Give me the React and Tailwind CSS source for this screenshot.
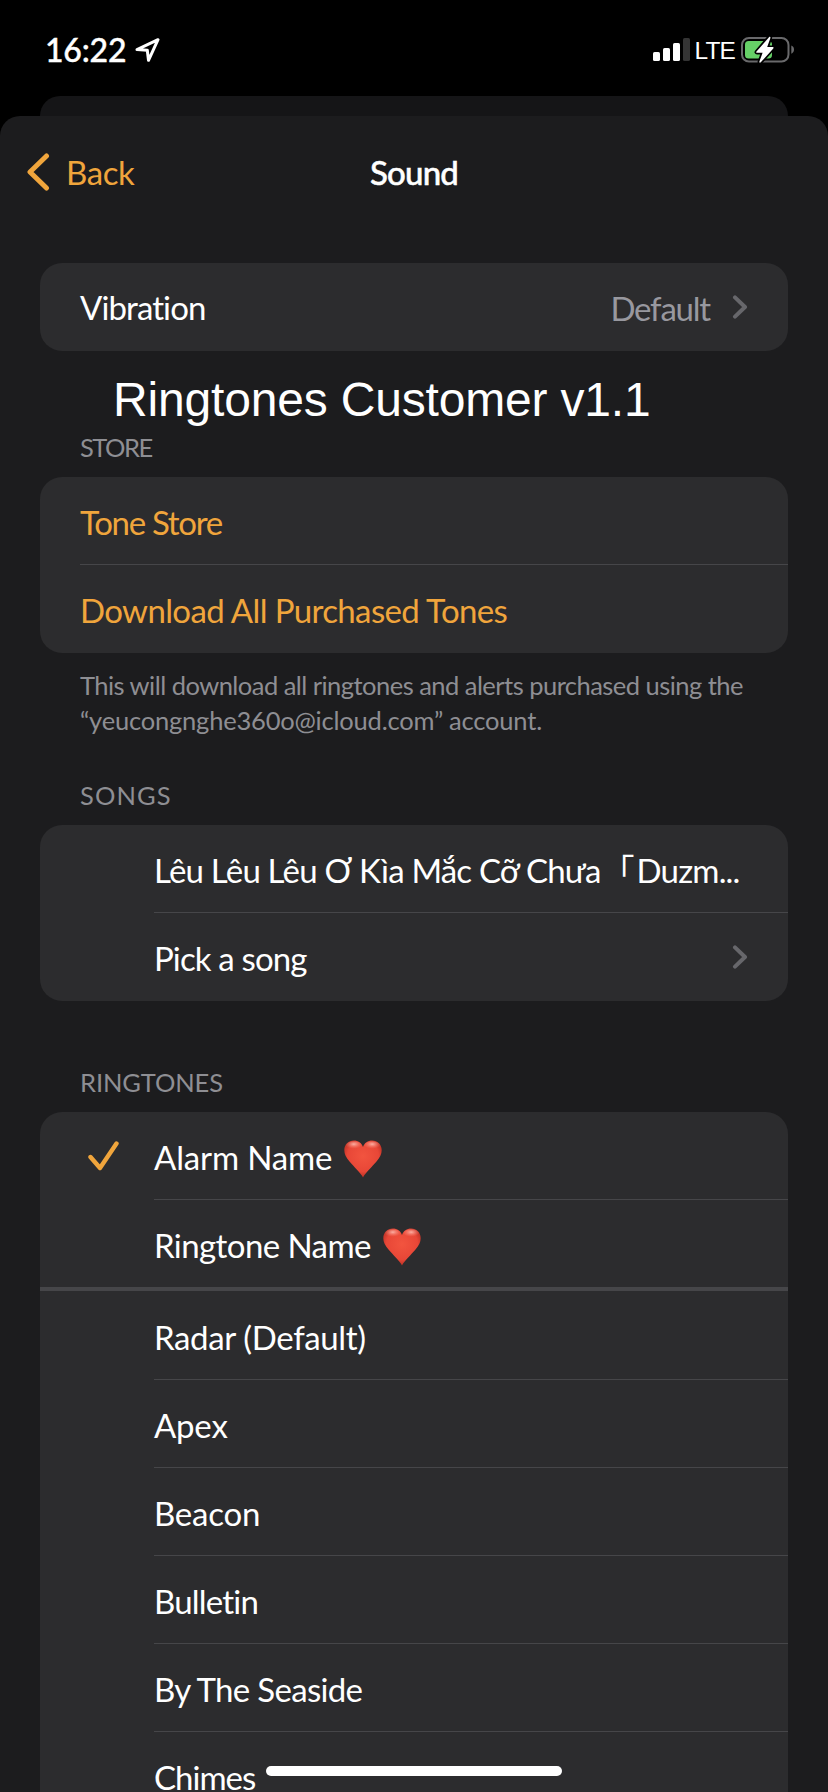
import React from "react";

const ringtones = [
  { name: "Apex", spacing: "tracking-[-0.2px]" },
  { name: "Beacon", spacing: "tracking-[-0.22px]" },
  { name: "Bulletin", spacing: "tracking-[-0.8px]" },
  { name: "By The Seaside", spacing: "tracking-[-0.68px]" },
];

function LocationArrow() {
  return (
    <svg className="ml-[9px] h-6 w-[25px]" viewBox="0 0 25 24" fill="none">
      <path d="M2 11.600 23 1.700 13.500 22.300 12.300 12.300Z" stroke="#fff" strokeWidth="3" strokeLinejoin="round" />
    </svg>
  );
}

function SignalBars() {
  return (
    <svg className="h-6 w-[37px]" viewBox="0 0 37 24">
      <rect x="0" y="14" width="7" height="9" rx="1.6" fill="#fff" />
      <rect x="10" y="10" width="7" height="13" rx="1.6" fill="#fff" />
      <rect x="20" y="5" width="7" height="18" rx="1.6" fill="#fff" />
      <rect x="30" y="0" width="7" height="23" rx="1.6" fill="#343434" />
    </svg>
  );
}

function Battery() {
  return (
    <svg className="h-[27px] w-[54px]" viewBox="0 0 54 27">
      <rect x="1" y="2" width="46.5" height="23.5" rx="7" fill="none" stroke="#69696b" strokeWidth="2" />
      <path d="M50.3 9.5c3.6 1.2 3.6 7 0 8.3Z" fill="#69696b" />
      <rect x="4" y="5" width="27" height="17.5" rx="3.5" fill="#66d067" />
      <path
        d="M28 1.2 15.5 15.5c-.6.7-.3 1.3.5 1.3h5.6l-3.2 8.6c-.4 1.2.6 1.7 1.4.9L32.3 12.4c.6-.7.3-1.3-.5-1.3h-5.6L29.4 2c.3-1-.6-1.6-1.4-.8Z"
        fill="#fff"
        stroke="#000"
        strokeWidth="3.4"
        paintOrder="stroke"
      />
    </svg>
  );
}

function Chevron() {
  return (
    <svg className="h-6 w-4" viewBox="0 0 16 24" fill="none">
      <path d="M3 2.4 13 12 3 21.6" stroke="#67676b" strokeWidth="4" strokeLinecap="round" strokeLinejoin="round" />
    </svg>
  );
}

function Check() {
  return (
    <svg className="h-[30px] w-[31px]" viewBox="0 0 31 30" fill="none">
      <path d="M2.5 16 12 27 28.5 2.5" stroke="#f0a53c" strokeWidth="4.4" strokeLinecap="round" strokeLinejoin="round" />
    </svg>
  );
}

function Heart({ id }) {
  return (
    <svg className="h-[38px] w-[38px]" viewBox="0 0 38 38">
      <defs>
        <radialGradient id={`${id}-body`} cx="0.5" cy="0.42" r="0.64">
          <stop offset="0" stopColor="#f2543f" />
          <stop offset="0.65" stopColor="#e84737" />
          <stop offset="1" stopColor="#a8281d" />
        </radialGradient>
        <radialGradient id={`${id}-gloss`} cx="0.5" cy="0.35" r="0.55">
          <stop offset="0" stopColor="#ffc9be" stopOpacity="0.8" />
          <stop offset="1" stopColor="#ff8a78" stopOpacity="0" />
        </radialGradient>
      </defs>
      <path
        d="M19 37.5C16.500 32.500 10 27 5.500 21.500 2 17.500.3 14 .3 10.300.3 4.500 4.600.6 9.800.6 14.200.6 17.600 3 19 7 20.400 3 23.800.6 28.200.6 33.400.6 37.700 4.500 37.700 10.300 37.700 14 36 17.500 32.500 21.500 28 27 21.500 32.500 19 37.500Z"
        fill={`url(#${id}-body)`}
      />
      <ellipse cx="9.800" cy="5.400" rx="8" ry="4.200" fill={`url(#${id}-gloss)`} />
      <ellipse cx="28.200" cy="5.400" rx="8" ry="4.200" fill={`url(#${id}-gloss)`} />
    </svg>
  );
}

function Card({ className = "", children }) {
  return <section className={`flex flex-col bg-[#2c2c2e] ${className}`}>{children}</section>;
}

function Separator({ inset }) {
  return <div className={`h-px shrink-0 bg-[#464649] ${inset}`} />;
}

export default function App() {
  return (
    <div className="flex h-[1792px] w-[828px] flex-col overflow-hidden bg-black font-['Lato','Noto_Sans_CJK_JP',sans-serif] text-[33px] leading-10 text-white">
      <header className="flex h-24 shrink-0 justify-between pr-[33px] pl-[45px]">
        <div className="flex h-[62px] items-end">
          <span className="-mb-[7px] text-[32px] leading-[38px] font-medium tracking-[-0.2px] [-webkit-text-stroke:0.4px_white]">16:22</span>
          <LocationArrow />
        </div>
        <div className="flex h-[62px] items-end">
          <SignalBars />
          <span className="ml-[5px] -mb-[3px] font-['Liberation_Sans',sans-serif] text-[24.500px] leading-7 tracking-[-0.9px]">LTE</span>
          <div className="ml-[6px] -mb-px">
            <Battery />
          </div>
        </div>
      </header>

      <div className="mx-10 h-5 shrink-0 rounded-t-[20px] bg-[#151517]" />

      <main className="relative flex min-h-0 flex-1 flex-col rounded-t-[20px] bg-[#1c1c1e]">
        <nav className="grid h-[147px] shrink-0 grid-cols-3 items-start pt-9">
          <div className="flex items-center pl-[27px] text-[#f0a53c]">
            <svg className="h-[38px] w-[23px]" viewBox="0 0 23 38" fill="none">
              <path d="M19.500 3 3 19 19.500 35" stroke="currentColor" strokeWidth="5" strokeLinecap="round" strokeLinejoin="round" />
            </svg>
            <span className="ml-4 tracking-[-0.4px]">Back</span>
          </div>
          <h1 className="text-center font-medium tracking-[-0.8px] [-webkit-text-stroke:0.5px_white]">Sound</h1>
        </nav>

        <Card className="mx-10 h-[88px] shrink-0 rounded-[22px]">
          <div className="flex h-[88px] items-center pr-10 pl-10">
            <span className="flex-1 tracking-[-0.9px]">Vibration</span>
            <span className="pt-[2px] tracking-[-1.2px] text-[#98989f]">Default</span>
            <span className="ml-[22px] flex">
              <Chevron />
            </span>
          </div>
        </Card>

        <h2 className="h-[81px] shrink-0 pt-[22px] pl-[113px] font-['Liberation_Sans',sans-serif] text-[48px] leading-[54px] tracking-[-0.18px]">
          Ringtones Customer v1.1
        </h2>
        <h3 className="h-[45px] shrink-0 pl-20 text-[25.500px] leading-[30px] tracking-[-1.500px] text-[#8e8e93]">STORE</h3>

        <Card className="mx-10 shrink-0 rounded-[22px] text-[#f0a53c]">
          <div className="flex h-[87px] items-center pt-[3px] pl-10 tracking-[-1.3px]">Tone Store</div>
          <Separator inset="ml-10" />
          <div className="flex h-[88px] items-center pt-[2px] pl-10 tracking-[-0.62px]">Download All Purchased Tones</div>
        </Card>

        <p className="mt-[15px] h-[71px] shrink-0 pl-20 text-[25.500px] leading-[35px] text-[#8e8e93]">
          <span className="block whitespace-nowrap tracking-[-0.53px]">This will download all ringtones and alerts purchased using the</span>
          <span className="block whitespace-nowrap tracking-[-0.2px]">“yeucongnghe360o@icloud.com” account.</span>
        </p>

        <h3 className="mt-[41px] h-[45px] shrink-0 pl-20 text-[25.500px] leading-[30px] tracking-[1.100px] text-[#8e8e93]">SONGS</h3>

        <Card className="mx-10 shrink-0 rounded-[22px]">
          <div className="flex h-[87px] items-center pt-[3px] pl-[114px] whitespace-nowrap">
            <span className="tracking-[-0.8px]">Lêu Lêu Lêu Ơ Kìa Mắc Cỡ Chưa</span>
            <span className="ml-[1px] w-[35px] tracking-[0px]">「</span>
            <span className="tracking-[-0.8px]">Duzm...</span>
          </div>
          <Separator inset="ml-[114px]" />
          <div className="flex h-[88px] items-center justify-between pr-10 pl-[114px]">
            <span className="pt-[2px] tracking-[-0.85px]">Pick a song</span>
            <Chevron />
          </div>
        </Card>

        <h3 className="mt-[66px] h-[45px] shrink-0 pl-20 text-[25.500px] leading-[30px] tracking-[-0.1px] text-[#8e8e93]">RINGTONES</h3>

        <Card className="mx-10 min-h-0 flex-1 overflow-hidden rounded-t-[22px]">
          <div className="flex h-[87px] shrink-0 items-center">
            <div className="flex w-[114px] pl-12">
              <Check />
            </div>
            <span className="pt-[3px] tracking-[-0.15px]">Alarm Name</span>
            <span className="ml-3 pt-[6px]">
              <Heart id="alarm" />
            </span>
          </div>
          <Separator inset="ml-[114px]" />
          <div className="flex h-[87px] shrink-0 items-center pl-[114px]">
            <span className="pt-[3px] tracking-[-0.58px]">Ringtone Name</span>
            <span className="ml-3 pt-[6px]">
              <Heart id="ringtone" />
            </span>
          </div>
          <div className="mb-px h-1 shrink-0 bg-[#464649]" />
          <div className="flex h-[87px] shrink-0 items-center pt-[3px] pl-[114px] tracking-[-0.36px]">Radar (Default)</div>
          {ringtones.map((tone) => (
            <React.Fragment key={tone.name}>
              <Separator inset="ml-[114px]" />
              <div className={`flex h-[87px] shrink-0 items-center pt-[3px] pl-[114px] ${tone.spacing}`}>{tone.name}</div>
            </React.Fragment>
          ))}
          <Separator inset="ml-[114px]" />
          <div className="shrink-0 pt-[28px] pl-[114px] leading-[35px] tracking-[-1px]">Chimes</div>
        </Card>

        <div className="absolute bottom-4 left-[266px] h-[10px] w-[296px] rounded-full bg-white" />
      </main>
    </div>
  );
}
